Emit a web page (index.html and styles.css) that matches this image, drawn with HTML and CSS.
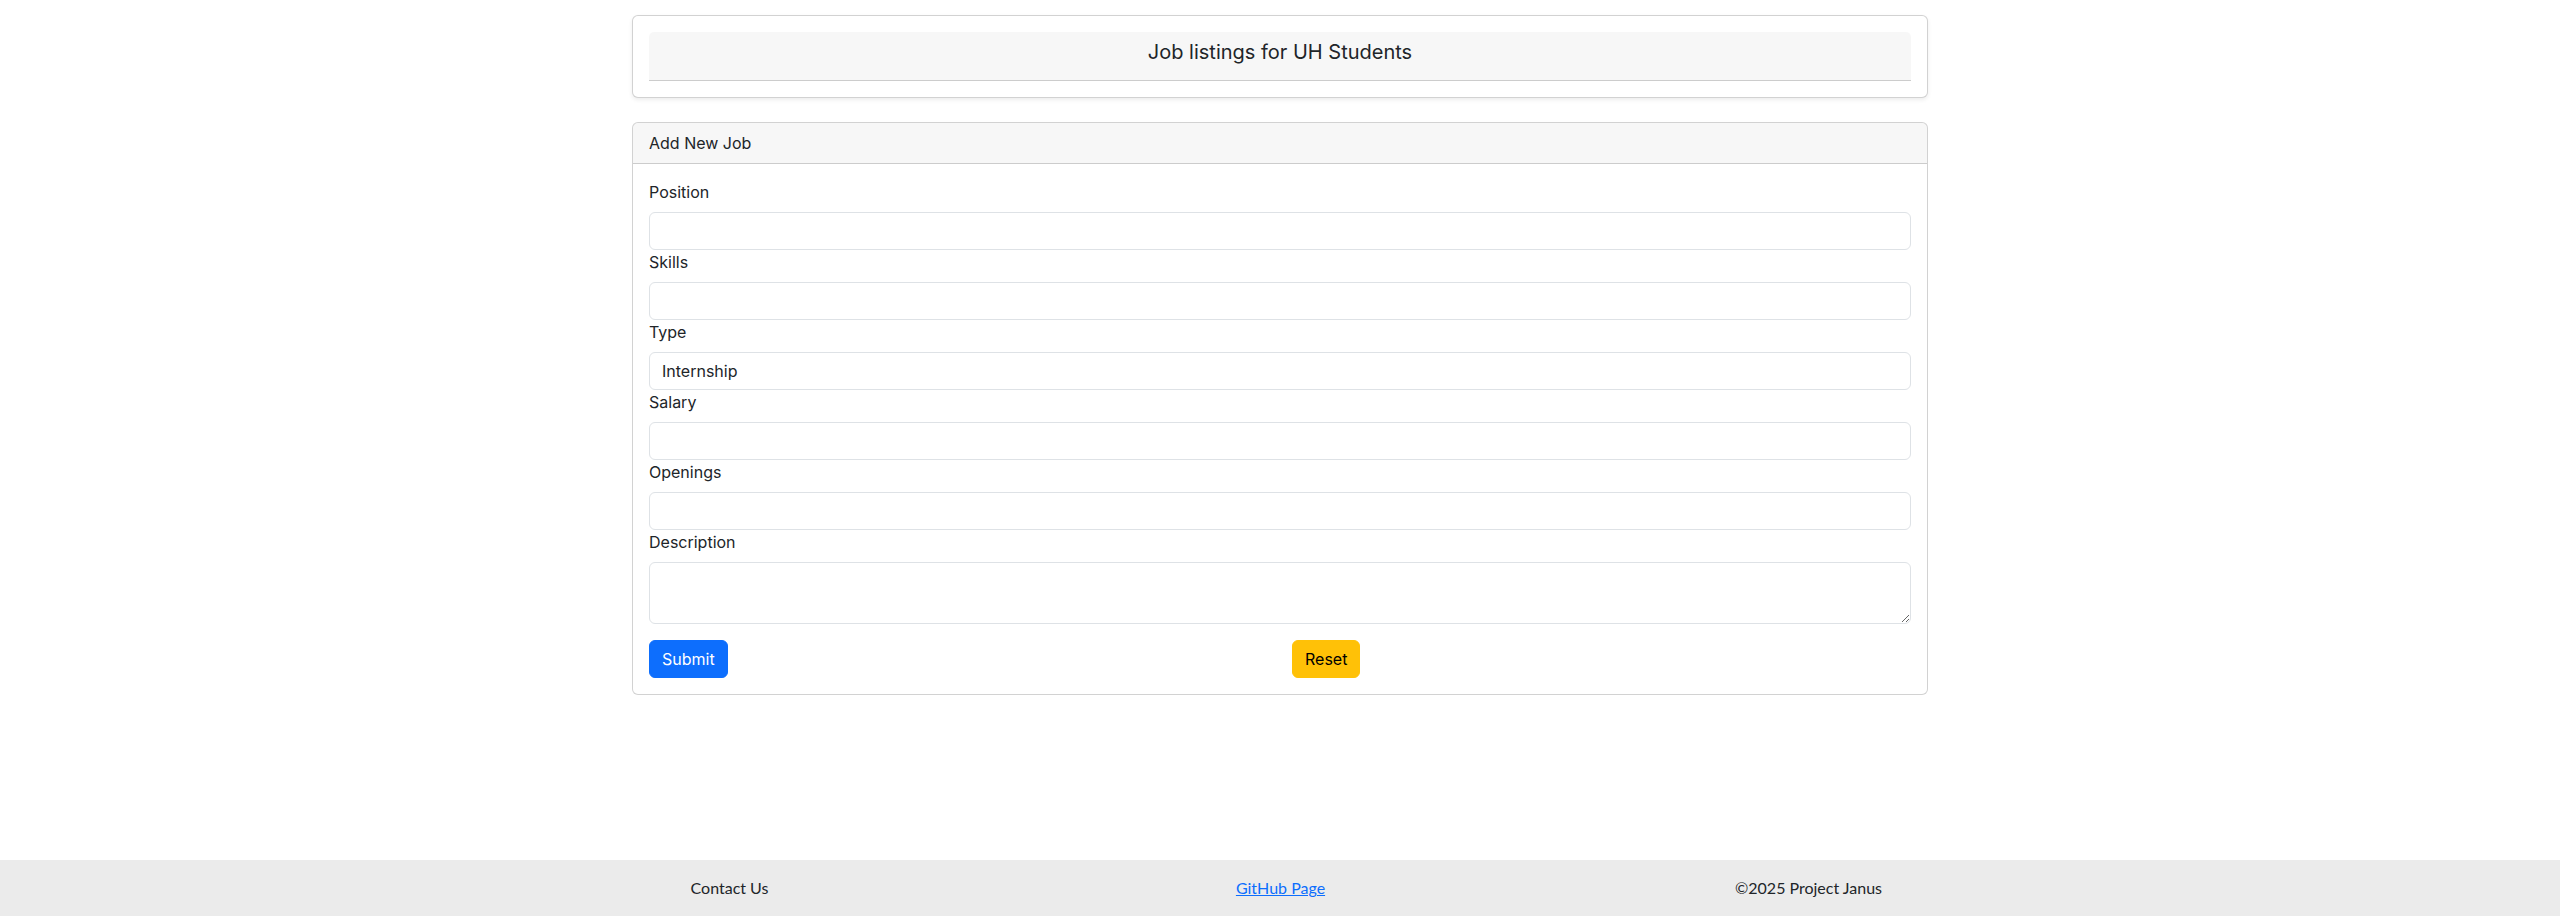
FILE: index.html
```html
<!DOCTYPE html>
<html lang="en">
<head>
<meta charset="utf-8">
<title>Job listings for UH Students</title>
<link rel="stylesheet" href="styles.css">
</head>
<body>
<div class="page">
  <main class="container">
    <section class="card title-card">
      <div class="card-header title-header">
        <h5 class="title">Job listings for UH Students</h5>
      </div>
    </section>

    <section class="card form-card">
      <div class="card-header">Add New Job</div>
      <form class="card-body">
        <div class="field">
          <label class="form-label" for="position">Position</label>
          <input class="form-control" id="position" type="text">
        </div>
        <div class="field">
          <label class="form-label" for="skills">Skills</label>
          <input class="form-control" id="skills" type="text">
        </div>
        <div class="field">
          <label class="form-label" for="type">Type</label>
          <input class="form-control" id="type" type="text" value="Internship">
        </div>
        <div class="field">
          <label class="form-label" for="salary">Salary</label>
          <input class="form-control" id="salary" type="text">
        </div>
        <div class="field">
          <label class="form-label" for="openings">Openings</label>
          <input class="form-control" id="openings" type="text">
        </div>
        <div class="field">
          <label class="form-label" for="description">Description</label>
          <textarea class="form-control textarea" id="description" rows="2"></textarea>
        </div>
        <div class="actions">
          <div class="col"><button type="submit" class="btn btn-primary">Submit</button></div>
          <div class="col"><button type="reset" class="btn btn-warning">Reset</button></div>
        </div>
      </form>
    </section>
  </main>

  <footer class="footer">
    <div class="footer-inner">
      <div class="footer-col">Contact Us</div>
      <div class="footer-col"><a href="#" class="footer-link">GitHub Page</a></div>
      <div class="footer-col footer-col-last">©2025 Project Janus</div>
    </div>
  </footer>
</div>
</body>
</html>
```

FILE: styles.css
```css
* { box-sizing: border-box; }

html, body {
  margin: 0;
  padding: 0;
}

body {
  font-family: Inter, "Noto Sans", sans-serif;
  font-size: 16px;
  line-height: 1.5;
  color: #212529;
  background: #ffffff;
}

.page {
  min-height: 100vh;
  display: flex;
  flex-direction: column;
}

.container {
  width: 1320px;
  padding: 0 12px;
  margin: 0 auto;
}

.card {
  border: 1px solid rgba(0, 0, 0, 0.175);
  border-radius: 6px;
  background: #fff;
}

.card-header {
  padding: 8px 16px;
  background: rgba(0, 0, 0, 0.03);
  border-bottom: 1px solid rgba(0, 0, 0, 0.175);
  border-radius: 5px 5px 0 0;
}

.title-card {
  margin-top: 15px;
  padding: 16px;
  box-shadow: 0 2px 4px rgba(0, 0, 0, 0.075);
}

.title {
  margin: 0 0 8px;
  font-size: 20px;
  font-weight: 400;
  line-height: 1.2;
  text-align: center;
}

.form-card {
  margin-top: 24px;
}

.card-body {
  display: flex;
  flex-direction: column;
  padding: 16px;
}

.form-label {
  display: block;
  margin-bottom: 8px;
}

.form-control {
  display: block;
  width: 100%;
  height: 38px;
  padding: 6px 12px;
  font-family: inherit;
  font-size: 16px;
  line-height: 1.5;
  color: #212529;
  background: #fff;
  border: 1px solid #dee2e6;
  border-radius: 6px;
  outline: none;
}

.textarea {
  height: 62px;
  resize: vertical;
}

.actions {
  display: grid;
  grid-template-columns: 1fr 1fr;
  column-gap: 24px;
  margin-top: 16px;
}

.btn {
  display: inline-block;
  padding: 6px 12px;
  font-family: inherit;
  font-size: 16px;
  line-height: 1.5;
  border: 1px solid transparent;
  border-radius: 6px;
  cursor: pointer;
}

.btn-primary {
  background: #0d6efd;
  border-color: #0d6efd;
  color: #fff;
}

.btn-warning {
  background: #ffc107;
  border-color: #ffc107;
  color: #000;
}

.footer {
  margin-top: auto;
  background: #ebebeb;
  padding: 16px 0;
  font-family: Lato, "Noto Sans", sans-serif;
  font-size: 16px;
  line-height: 24px;
}

.footer-inner {
  width: 1652px;
  margin: 0 auto;
  display: grid;
  grid-template-columns: 551px 551px 1fr;
}

.footer-col {
  text-align: center;
}

.footer-col-last {
  padding-right: 45px;
}

.footer-link {
  color: #0d6efd;
  text-decoration: underline;
}
```
